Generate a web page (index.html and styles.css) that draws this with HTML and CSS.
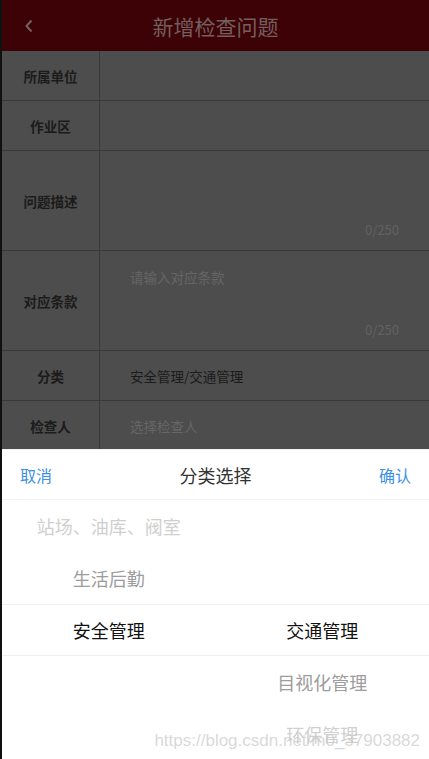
FILE: index.html
```html
<!DOCTYPE html>
<html lang="zh-CN">
<head>
<meta charset="utf-8">
<title>新增检查问题</title>
<link rel="stylesheet" href="styles.css">
</head>
<body>
<div class="app">
  <header class="nav">
    <span class="nav-back">
      <svg width="10" height="14" viewBox="0 0 10 14"><path d="M7.5 1.5 L2.5 7 L7.5 12.5" fill="none" stroke="currentColor" stroke-width="2"/></svg>
    </span>
    <h1 class="nav-title">新增检查问题</h1>
  </header>

  <section class="form">
    <div class="row">
      <div class="label">所属单位</div>
      <div class="value"></div>
    </div>
    <div class="row">
      <div class="label">作业区</div>
      <div class="value"></div>
    </div>
    <div class="row tall">
      <div class="label">问题描述</div>
      <div class="value area">
        <span class="counter">0/250</span>
      </div>
    </div>
    <div class="row tall">
      <div class="label">对应条款</div>
      <div class="value area">
        <span class="placeholder">请输入对应条款</span>
        <span class="counter">0/250</span>
      </div>
    </div>
    <div class="row">
      <div class="label">分类</div>
      <div class="value filled">安全管理/交通管理</div>
    </div>
    <div class="row last">
      <div class="label">检查人</div>
      <div class="value placeholder">选择检查人</div>
    </div>
  </section>

  <div class="sheet">
    <div class="sheet-bar">
      <span class="sheet-btn">取消</span>
      <span class="sheet-title">分类选择</span>
      <span class="sheet-btn">确认</span>
    </div>
    <div class="picker">
      <div class="band"></div>
      <ul class="col">
        <li class="far">站场、油库、阀室</li>
        <li class="near">生活后勤</li>
        <li class="on">安全管理</li>
        <li></li>
        <li></li>
      </ul>
      <ul class="col">
        <li></li>
        <li></li>
        <li class="on">交通管理</li>
        <li class="near">目视化管理</li>
        <li class="far">环保管理</li>
      </ul>
    </div>
  </div>

  <div class="mark">https://blog.csdn.net/m0_37903882</div>
</div>
</body>
</html>
```
FILE: styles.css
```css
* { box-sizing: border-box; }

html, body {
  margin: 0;
  padding: 0;
}

body {
  width: 429px;
  height: 759px;
  overflow: hidden;
  background: #fff;
  font-family: "Noto Sans CJK SC", "Noto Sans", sans-serif;
}

.app {
  position: relative;
  width: 429px;
  height: 759px;
  border-left: 2px solid #111;
  display: flex;
  flex-direction: column;
  background: #4d4d4d;
}

/* top navigation bar, dimmed under the sheet */
.nav {
  height: 51px;
  flex: none;
  background: #3c0206;
  display: flex;
  align-items: center;
  justify-content: center;
  position: relative;
}

.nav-back {
  position: absolute;
  left: 22px;
  top: 19px;
  color: #765f5f;
  display: flex;
}

.nav-title {
  margin: 0;
  font-size: 21px;
  font-weight: 400;
  color: #745e5e;
  letter-spacing: 0;
}

/* form rows */
.form {
  display: flex;
  flex-direction: column;
}

.row {
  display: grid;
  grid-template-columns: 98px 1fr;
  height: 50px;
  border-bottom: 1px solid #393939;
}

.row.tall { height: 100px; }
.row.last { border-bottom: none; }

.label {
  display: flex;
  align-items: center;
  justify-content: center;
  border-right: 1px solid #393939;
  font-size: 13.5px;
  font-weight: 700;
  color: #1b1b1b;
}

.value {
  display: flex;
  align-items: center;
  padding: 0 30px;
  font-size: 13.5px;
  color: #1b1b1b;
}

.value.area {
  position: relative;
  align-items: flex-start;
  padding-top: 16px;
}

.placeholder { color: #666; }

.counter {
  position: absolute;
  right: 30px;
  bottom: 11px;
  font-size: 13px;
  color: #626262;
}

/* bottom picker sheet */
.sheet {
  position: absolute;
  left: 0;
  right: 0;
  bottom: 0;
  height: 310px;
  background: #fff;
  border-top: 1px solid #f2f2f2;
}

.sheet-bar {
  height: 50px;
  display: flex;
  align-items: center;
  justify-content: space-between;
  padding: 0 18px 0 18px;
  border-bottom: 1px solid #f3f3f3;
}

.sheet-btn {
  font-size: 16px;
  color: #3b8fe6;
}

.sheet-title {
  font-size: 18px;
  color: #333;
}

.picker {
  position: relative;
  display: grid;
  grid-template-columns: 1fr 1fr;
}

.band {
  position: absolute;
  left: 0;
  right: 0;
  top: 104px;
  height: 52px;
  border-top: 1px solid #f0f0f0;
  border-bottom: 1px solid #f0f0f0;
}

.col {
  list-style: none;
  margin: 0;
  padding: 0;
}

.col li {
  height: 52px;
  display: flex;
  align-items: center;
  justify-content: center;
  font-size: 18px;
  color: #111;
}

.col li.near { color: #9c9c9c; }
.col li.far { color: #cfcfcf; }

.mark {
  position: absolute;
  right: 9px;
  bottom: 8px;
  font-family: "Liberation Sans", Arial, sans-serif;
  font-size: 17px;
  color: rgba(200, 200, 200, 0.7);
  pointer-events: none;
}
```
